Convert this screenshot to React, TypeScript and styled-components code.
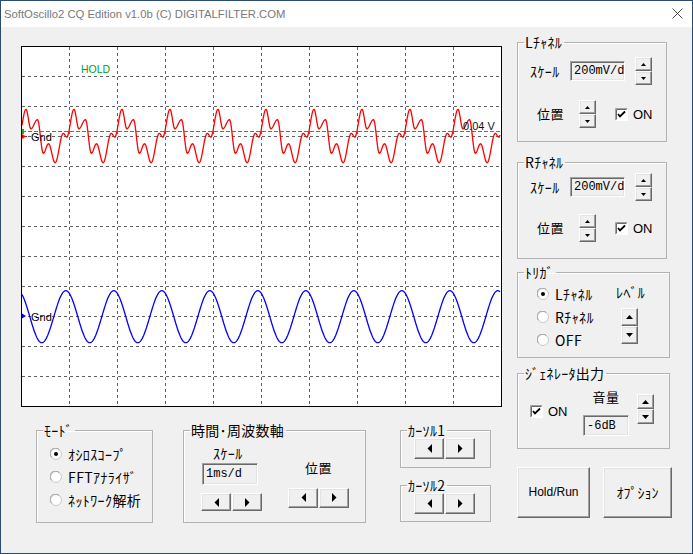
import React from 'react';
import styled, {createGlobalStyle} from 'styled-components';

const GlobalStyle = createGlobalStyle`
  html, body {
    margin: 0;
    padding: 0;
    background: #f0f0f0;
  }
  body {
    font-family: "Noto Sans CJK JP", "Liberation Sans", sans-serif;
    color: #000;
  }
`;

const Window = styled.div`
  width: 693px;
  height: 554px;
  box-sizing: border-box;
  border: 1px solid #2b4c6f;
  background: #f0f0f0;
  display: flex;
  flex-direction: column;
  overflow: hidden;
`;

const TitleBar = styled.div`
  height: 26px;
  box-sizing: border-box;
  flex: none;
  background: #fff;
  display: flex;
  align-items: center;
  justify-content: space-between;
  padding: 0 9px 1px 3px;
  font-family: "Liberation Sans", sans-serif;
  font-size: 11.3px;
  color: #7a7a7a;
`;

const Client = styled.div`
  display: flex;
  padding-left: 20px;
`;

const LeftCol = styled.div`
  width: 481px;
  padding-top: 19px;
`;

const RightCol = styled.div`
  margin-left: 15px;
  padding-top: 8px;
  display: flex;
  flex-direction: column;
`;

const Scope = styled.div`
  width: 481px;
  height: 361px;
  box-sizing: border-box;
  border: 1px solid #000;
  background: #fff;
  > svg {
    display: block;
  }
`;

const BottomRow = styled.div`
  display: flex;
  align-items: flex-start;
  margin-top: 16px;
  padding-left: 15px;
`;

const Group = styled.fieldset<{ $w: number; $h: number; $mt?: number; $ml?: number }>`
  margin: ${p => p.$mt || 0}px 0 0 ${p => p.$ml || 0}px;
  padding: 0;
  min-width: 0;
  width: ${p => p.$w}px;
  height: ${p => p.$h}px;
  box-sizing: border-box;
  border: 1px solid #b2b2b2;
  box-shadow: inset 1px 1px #fff;
`;

const Legend = styled.legend<{ $size?: number }>`
  margin-left: 6px;
  padding: 0 2px 0 1px;
  font-size: ${p => p.$size || 14}px;
  letter-spacing: 0.3px;
  line-height: 14px;
  height: 14px;
`;

const Row = styled.div<{ $mt?: number; $pl?: number; $h?: number; $top?: boolean }>`
  display: flex;
  align-items: ${p => (p.$top ? 'flex-start' : 'center')};
  margin-top: ${p => p.$mt || 0}px;
  padding-left: ${p => p.$pl || 0}px;
  height: ${p => (p.$h ? `${p.$h}px` : 'auto')};
`;

const Col = styled.div<{ $w?: number; $mt?: number; $ml?: number; $center?: boolean }>`
  display: flex;
  flex-direction: column;
  align-items: ${p => (p.$center ? 'center' : 'flex-start')};
  width: ${p => (p.$w ? `${p.$w}px` : 'auto')};
  margin-top: ${p => p.$mt || 0}px;
  margin-left: ${p => p.$ml || 0}px;
`;

const Label = styled.span<{ $w?: number; $size?: number; $ml?: number; $mt?: number }>`
  display: inline-block;
  width: ${p => (p.$w ? `${p.$w}px` : 'auto')};
  margin-left: ${p => p.$ml || 0}px;
  margin-top: ${p => p.$mt || 0}px;
  font-size: ${p => p.$size || 14}px;
  letter-spacing: 0.4px;
  line-height: 14px;
  white-space: nowrap;
`;

const TextBox = styled.div<{ $w: number; $h: number; $ml?: number; $mt?: number }>`
  width: ${p => p.$w}px;
  height: ${p => p.$h}px;
  margin-left: ${p => p.$ml || 0}px;
  margin-top: ${p => p.$mt || 0}px;
  box-sizing: border-box;
  border: 1px solid;
  border-color: #a0a0a0 #fff #fff #a0a0a0;
  box-shadow: inset 1px 1px #696969, inset -1px -1px #e3e3e3;
  background: #f0f0f0;
  display: flex;
  align-items: center;
  padding-left: 3px;
  font-family: "Liberation Mono", monospace;
  font-size: 12px;
`;

const Raised = styled.div<{ $w: number; $h: number }>`
  width: ${p => p.$w}px;
  height: ${p => p.$h}px;
  box-sizing: border-box;
  border: 1px solid;
  border-color: #fff #696969 #696969 #fff;
  box-shadow: inset -1px -1px #a0a0a0, inset 1px 1px #e3e3e3;
  background: #f0f0f0;
  display: flex;
  align-items: center;
  justify-content: center;
`;

const SpinBox = styled.div<{ $ml?: number; $mt?: number }>`
  display: flex;
  flex-direction: column;
  margin-left: ${p => p.$ml || 0}px;
  margin-top: ${p => p.$mt || 0}px;
`;

const PairBox = styled.div<{ $ml?: number; $mt?: number }>`
  display: flex;
  gap: 1px;
  margin-left: ${p => p.$ml || 0}px;
  margin-top: ${p => p.$mt || 0}px;
`;

const ButtonRow = styled.div`
  display: flex;
  gap: 13px;
  margin-top: 18px;
`;

const BigButton = styled(Raised)<{ $kana?: boolean }>`
  font-family: ${p => (p.$kana ? '"Noto Sans CJK JP", sans-serif' : '"Liberation Sans", sans-serif')};
  font-size: ${p => (p.$kana ? 14 : 12)}px;
  padding-bottom: 2px;
`;

const Option = styled.div<{ $mt?: number }>`
  display: flex;
  align-items: center;
  height: 23px;
  margin-top: ${p => p.$mt || 0}px;
  gap: 6px;
  font-size: 14px;
  letter-spacing: 0.4px;
`;

const CheckLine = styled.div<{ $ml?: number; $mt?: number }>`
  display: flex;
  align-items: center;
  gap: 5px;
  margin-left: ${p => p.$ml || 0}px;
  margin-top: ${p => p.$mt || 0}px;
  font-size: 13px;
  font-family: "Liberation Sans", sans-serif;
`;

const Arrow = ({dir, size = 'small'}: { dir: 'up' | 'down' | 'left' | 'right'; size?: 'small' | 'big' }) => {
  if (dir === 'left' || dir === 'right') {
    const pts = dir === 'left' ? '5,0 5,9 0.5,4.5' : '0,0 0,9 4.5,4.5';
    return <svg width="5" height="9" viewBox="0 0 5 9"><polygon points={pts} fill="#000"/></svg>;
  }
  const w = size === 'big' ? 7 : 5;
  const h = size === 'big' ? 4 : 3;
  const pts = dir === 'up' ? `0,${h} ${w},${h} ${w / 2},0` : `0,0 ${w},0 ${w / 2},${h}`;
  return <svg width={w} height={h} viewBox={`0 0 ${w} ${h}`}><polygon points={pts} fill="#000"/></svg>;
};

const Spin = ({h = 14, big = false, ml, mt}: { h?: number; big?: boolean; ml?: number; mt?: number }) => (
  <SpinBox $ml={ml} $mt={mt}>
    <Raised $w={17} $h={h}><Arrow dir="up" size={big ? 'big' : 'small'}/></Raised>
    <Raised $w={17} $h={h}><Arrow dir="down" size={big ? 'big' : 'small'}/></Raised>
  </SpinBox>
);

const Pair = ({w = 30, h = 20, ml, mt}: { w?: number; h?: number; ml?: number; mt?: number }) => (
  <PairBox $ml={ml} $mt={mt}>
    <Raised $w={w} $h={h}><Arrow dir="left"/></Raised>
    <Raised $w={w} $h={h}><Arrow dir="right"/></Raised>
  </PairBox>
);

const CheckBox = () => (
  <svg width="13" height="13" viewBox="0 0 13 13">
    <rect x="0" y="0" width="13" height="13" fill="#fff"/>
    <path d="M0.5 12.5 V0.5 H12.5" stroke="#a0a0a0" fill="none"/>
    <path d="M1.5 11.5 V1.5 H11.5" stroke="#696969" fill="none"/>
    <path d="M0.5 12.5 H12.5 V0.5" stroke="#fff" fill="none"/>
    <polyline points="3,6 5,8.5 10,3.5" stroke="#000" strokeWidth="1.8" fill="none"/>
  </svg>
);

const Radio = ({on = false}: { on?: boolean }) => (
  <svg width="12" height="12" viewBox="0 0 12 12">
    <circle cx="6" cy="6" r="5.5" fill="#fff" stroke="#c8c8c8"/>
    <path d="M1.6 9.2 A5 5 0 0 1 9.2 1.6" stroke="#9a9a9a" fill="none"/>
    {on && <circle cx="6" cy="6" r="2" fill="#000"/>}
  </svg>
);

// waveform drawing (page coords -> scope coords)
const OX = 22;
const OY = 47;
const RED_KEYS: [number, number][] = [
  [0, 109.3], [4.85, 128.8], [11.5, 119.6], [17.3, 153.3], [22.5, 143.8],
  [29.1, 162.7], [37.3, 133.3], [40.7, 137.2], [48, 109.3],
];

function redY(x: number) {
  const t = (((x - 26) % 48) + 48) % 48;
  for (let i = 0; i < RED_KEYS.length - 1; i++) {
    const [x0, y0] = RED_KEYS[i];
    const [x1, y1] = RED_KEYS[i + 1];
    if (t >= x0 && t <= x1) {
      const u = (t - x0) / (x1 - x0);
      return y0 + (y1 - y0) * (1 - Math.cos(Math.PI * u)) / 2;
    }
  }
  return 109.3;
}

function blueY(x: number) {
  return 316.7 - 26 * Math.cos(2 * Math.PI * (x - 65.8) / 48);
}

function trace(fn: (x: number) => number) {
  const pts: string[] = [];
  for (let x = 22; x <= 500; x += 0.5) {
    pts.push(`${(x - OX).toFixed(1)},${(fn(x) - OY).toFixed(2)}`);
  }
  return pts.join(' ');
}

const ScopeView = () => {
  const vx = Array.from({length: 9}, (_, i) => 47.5 + 48 * i);
  const hy = Array.from({length: 11}, (_, i) => 29.5 + 30 * i);
  return (
    <svg width="479" height="359" viewBox="0 0 479 359">
      {vx.map(x => <line key={'v' + x} x1={x} y1={0} x2={x} y2={359} stroke="#606060" strokeDasharray="3 3"/>)}
      {hy.map(y => <line key={'h' + y} x1={0} y1={y} x2={479} y2={y} stroke="#606060" strokeDasharray="3 3"/>)}
      <line x1={0} y1={84.5} x2={479} y2={84.5} stroke="#10b010" strokeDasharray="4 2"/>
      <polyline points={trace(redY)} fill="none" stroke="#ff0000" strokeWidth="1.3"/>
      <polyline points={trace(blueY)} fill="none" stroke="#0000ff" strokeWidth="1.3"/>
      <rect x={0} y={82} width={2} height={5} fill="#00c000"/>
      <polygon points="0,87 4,89.5 0,92" fill="#ff0000"/>
      <line x1={0} y1={89.5} x2={5} y2={89.5} stroke="#ff0000"/>
      <polygon points="0,266.5 4,269 0,271.5" fill="#0000ff"/>
      <g fontFamily="Liberation Sans, sans-serif" fontSize="11">
        <text x={9} y={94} fill="#000">Gnd</text>
        <text x={9} y={274} fill="#000">Gnd</text>
        <text x={441} y={82.5} fill="#111">0.04 V</text>
        <text x={59} y={25.5} fill="#00a030" fontSize="10.5">HOLD</text>
      </g>
    </svg>
  );
};

const CloseIcon = () => (
  <svg width="11" height="11" viewBox="0 0 11 11">
    <path d="M0.5 0.5 L10.5 10.5 M10.5 0.5 L0.5 10.5" stroke="#444" strokeWidth="1"/>
  </svg>
);

export default function App() {
  return (
    <Window>
      <GlobalStyle/>
      <TitleBar>
        <span>SoftOscillo2 CQ Edition v1.0b (C) DIGITALFILTER.COM</span>
        <CloseIcon/>
      </TitleBar>
      <Client>
        <LeftCol>
          <Scope>
            <ScopeView/>
          </Scope>
          <BottomRow>
            <Group $w={117} $h={100}>
              <Legend>ﾓｰﾄﾞ</Legend>
              <Col $mt={5} $ml={13}>
                <Option><Radio on/>ｵｼﾛｽｺｰﾌﾟ</Option>
                <Option><Radio/>FFTｱﾅﾗｲｻﾞ</Option>
                <Option><Radio/>ﾈｯﾄﾜｰｸ解析</Option>
              </Col>
            </Group>
            <Group $w={183} $h={100} $ml={30}>
              <Legend $size={14}>時間･周波数軸</Legend>
              <Row>
                <Col $w={61} $ml={17}>
                  <Label $ml={12} $mt={9}>ｽｹｰﾙ</Label>
                  <TextBox $w={56} $h={22} $ml={1} $mt={3}>1ms/d</TextBox>
                  <Pair h={18} mt={8}/>
                </Col>
                <Col $w={61} $ml={26} $center>
                  <Label $size={13} $mt={20}>位置</Label>
                  <Pair h={20} mt={13}/>
                </Col>
              </Row>
            </Group>
            <Col $ml={34}>
              <Group $w={91} $h={45}>
                <Legend>ｶｰｿﾙ1</Legend>
                <Pair h={21} ml={13} mt={1}/>
              </Group>
              <Group $w={91} $h={44} $mt={10}>
                <Legend>ｶｰｿﾙ2</Legend>
                <Pair h={21} ml={13} mt={1}/>
              </Group>
            </Col>
          </BottomRow>
        </LeftCol>
        <RightCol>
          <Group $w={150} $h={107}>
            <Legend>Lﾁｬﾈﾙ</Legend>
            <Row $mt={8} $pl={12} $h={28}>
              <Label $w={40}>ｽｹｰﾙ</Label>
              <TextBox $w={55} $h={20}>200mV/d</TextBox>
              <Spin ml={10}/>
            </Row>
            <Row $mt={15} $pl={19} $h={28}>
              <Label $w={42} $size={13}>位置</Label>
              <Spin/>
              <CheckLine $ml={19}><CheckBox/>ON</CheckLine>
            </Row>
          </Group>
          <Group $w={150} $h={104} $mt={13}>
            <Legend>Rﾁｬﾈﾙ</Legend>
            <Row $mt={4} $pl={12} $h={28}>
              <Label $w={40}>ｽｹｰﾙ</Label>
              <TextBox $w={55} $h={20}>200mV/d</TextBox>
              <Spin ml={10}/>
            </Row>
            <Row $mt={13} $pl={19} $h={28}>
              <Label $w={42} $size={13}>位置</Label>
              <Spin/>
              <CheckLine $ml={19}><CheckBox/>ON</CheckLine>
            </Row>
          </Group>
          <Group $w={153} $h={93} $mt={6}>
            <Legend>ﾄﾘｶﾞ</Legend>
            <Row $top $pl={19}>
              <Col $w={79} $mt={3}>
                <Option><Radio on/>Lﾁｬﾈﾙ</Option>
                <Option><Radio/>Rﾁｬﾈﾙ</Option>
                <Option><Radio/>OFF</Option>
              </Col>
              <Col $mt={6}>
                <Label>ﾚﾍﾞﾙ</Label>
                <Spin h={18} big ml={5} mt={9}/>
              </Col>
            </Row>
          </Group>
          <Group $w={153} $h={83} $mt={8}>
            <Legend>ｼﾞｪﾈﾚｰﾀ出力</Legend>
            <Row $top $pl={12}>
              <Col $w={53} $mt={24}>
                <CheckLine><CheckBox/>ON</CheckLine>
              </Col>
              <Col $w={46} $mt={10} $center>
                <Label $size={13}>音量</Label>
                <TextBox $w={46} $h={21} $mt={11}>-6dB</TextBox>
              </Col>
              <Spin h={15} big ml={8} mt={14}/>
            </Row>
          </Group>
          <ButtonRow>
            <BigButton $w={73} $h={51}>Hold/Run</BigButton>
            <BigButton $w={69} $h={51} $kana>ｵﾌﾟｼｮﾝ</BigButton>
          </ButtonRow>
        </RightCol>
      </Client>
    </Window>
  );
}
